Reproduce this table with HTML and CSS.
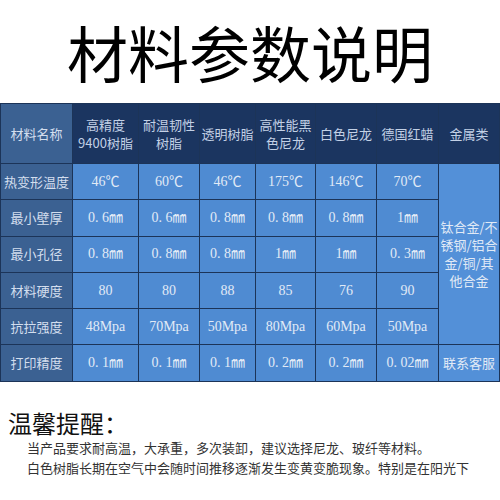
FILE: index.html
```html
<!DOCTYPE html>
<html lang="zh">
<head>
<meta charset="utf-8">
<link rel="stylesheet" href="styles.css">
</head>
<body>
<div class="page">
  <h1 class="title">材料参数说明</h1>
  <div class="grid">
    <div class="c h first">材料名称</div>
    <div class="c h">高精度<br>9400树脂</div>
    <div class="c h">耐温韧性<br>树脂</div>
    <div class="c h">透明树脂</div>
    <div class="c h">高性能黑<br>色尼龙</div>
    <div class="c h">白色尼龙</div>
    <div class="c h">德国红蜡</div>
    <div class="c h">金属类</div>

    <div class="c first">热变形温度</div>
    <div class="c d">46℃</div>
    <div class="c d">60℃</div>
    <div class="c d">46℃</div>
    <div class="c d">175℃</div>
    <div class="c d">146℃</div>
    <div class="c d">70℃</div>
    <div class="c d metal"><span class="metal-text">钛合金/不锈钢/铝合金/铜/其他合金</span></div>

    <div class="c first">最小壁厚</div>
    <div class="c d">0. 6㎜</div>
    <div class="c d">0. 6㎜</div>
    <div class="c d">0. 8㎜</div>
    <div class="c d">0. 8㎜</div>
    <div class="c d">0. 8㎜</div>
    <div class="c d">1㎜</div>

    <div class="c first">最小孔径</div>
    <div class="c d">0. 8㎜</div>
    <div class="c d">0. 8㎜</div>
    <div class="c d">0. 8㎜</div>
    <div class="c d">1㎜</div>
    <div class="c d">1㎜</div>
    <div class="c d">0. 3㎜</div>

    <div class="c first">材料硬度</div>
    <div class="c d">80</div>
    <div class="c d">80</div>
    <div class="c d">88</div>
    <div class="c d">85</div>
    <div class="c d">76</div>
    <div class="c d">90</div>

    <div class="c first">抗拉强度</div>
    <div class="c d">48Mpa</div>
    <div class="c d">70Mpa</div>
    <div class="c d">50Mpa</div>
    <div class="c d">80Mpa</div>
    <div class="c d">60Mpa</div>
    <div class="c d">50Mpa</div>

    <div class="c first">打印精度</div>
    <div class="c d">0. 1㎜</div>
    <div class="c d">0. 1㎜</div>
    <div class="c d">0. 1㎜</div>
    <div class="c d">0. 2㎜</div>
    <div class="c d">0. 2㎜</div>
    <div class="c d">0. 02㎜</div>
    <div class="c d cjk">联系客服</div>
  </div>
  <div class="notes">
    <h2 class="notes-title">温馨提醒：</h2>
    <p class="note">当产品要求耐高温，大承重，多次装卸，建议选择尼龙、玻纤等材料。</p>
    <p class="note">白色树脂长期在空气中会随时间推移逐渐发生变黄变脆现象。特别是在阳光下</p>
  </div>
</div>
</body>
</html>
```
FILE: styles.css
```css
html, body {
  margin: 0;
  padding: 0;
  background: #ffffff;
}
.page {
  width: 500px;
  height: 500px;
  overflow: hidden;
  font-family: "Noto Sans CJK SC", sans-serif;
}
.title {
  margin: 0;
  height: 103px;
  display: flex;
  align-items: center;
  justify-content: center;
  font-size: 61px;
  font-weight: 400;
  color: #000;
  line-height: 1;
  box-sizing: border-box;
}
.grid {
  display: grid;
  grid-template-columns: 71px 65px 60px 55px 59px 60px 61px 1fr;
  grid-template-rows: 59px repeat(6, 35.3px);
  gap: 1px;
  background: #1c3458;
  border: 1px solid #1c3458;
  width: 500px;
  box-sizing: border-box;
}
.c {
  display: flex;
  align-items: center;
  justify-content: center;
  text-align: center;
  font-size: 13px;
  line-height: 18px;
  font-family: "Noto Sans CJK SC", sans-serif;
}
.h {
  background: #1b3560;
  color: #c3d1e6;
}
.first {
  background: #3b6192;
  color: #d3deee;
}
.d {
  background: #4f8bd2;
  color: #e1eaf6;
  font-family: "Liberation Serif", "Noto Sans CJK SC", serif;
  font-size: 14px;
}
.metal {
  grid-row: span 5;
  padding: 0;
  background: #5390d8;
}
.metal-text {
  display: block;
  width: 60px;
  font-family: "Noto Sans CJK SC", sans-serif;
  font-size: 13px;
  line-height: 18px;
  word-break: break-all;
  line-break: anywhere;
}
.cjk {
  font-family: "Noto Sans CJK SC", sans-serif;
  font-size: 13px;
  background: #5390d8;
}
.notes {
  padding: 26px 0 0 8px;
}
.notes-title {
  margin: 0;
  font-size: 24px;
  font-weight: 400;
  line-height: 30px;
  color: #111;
}
.note {
  margin: 0;
  padding-left: 19px;
  font-size: 13px;
  line-height: 20px;
  color: #333;
}
```
